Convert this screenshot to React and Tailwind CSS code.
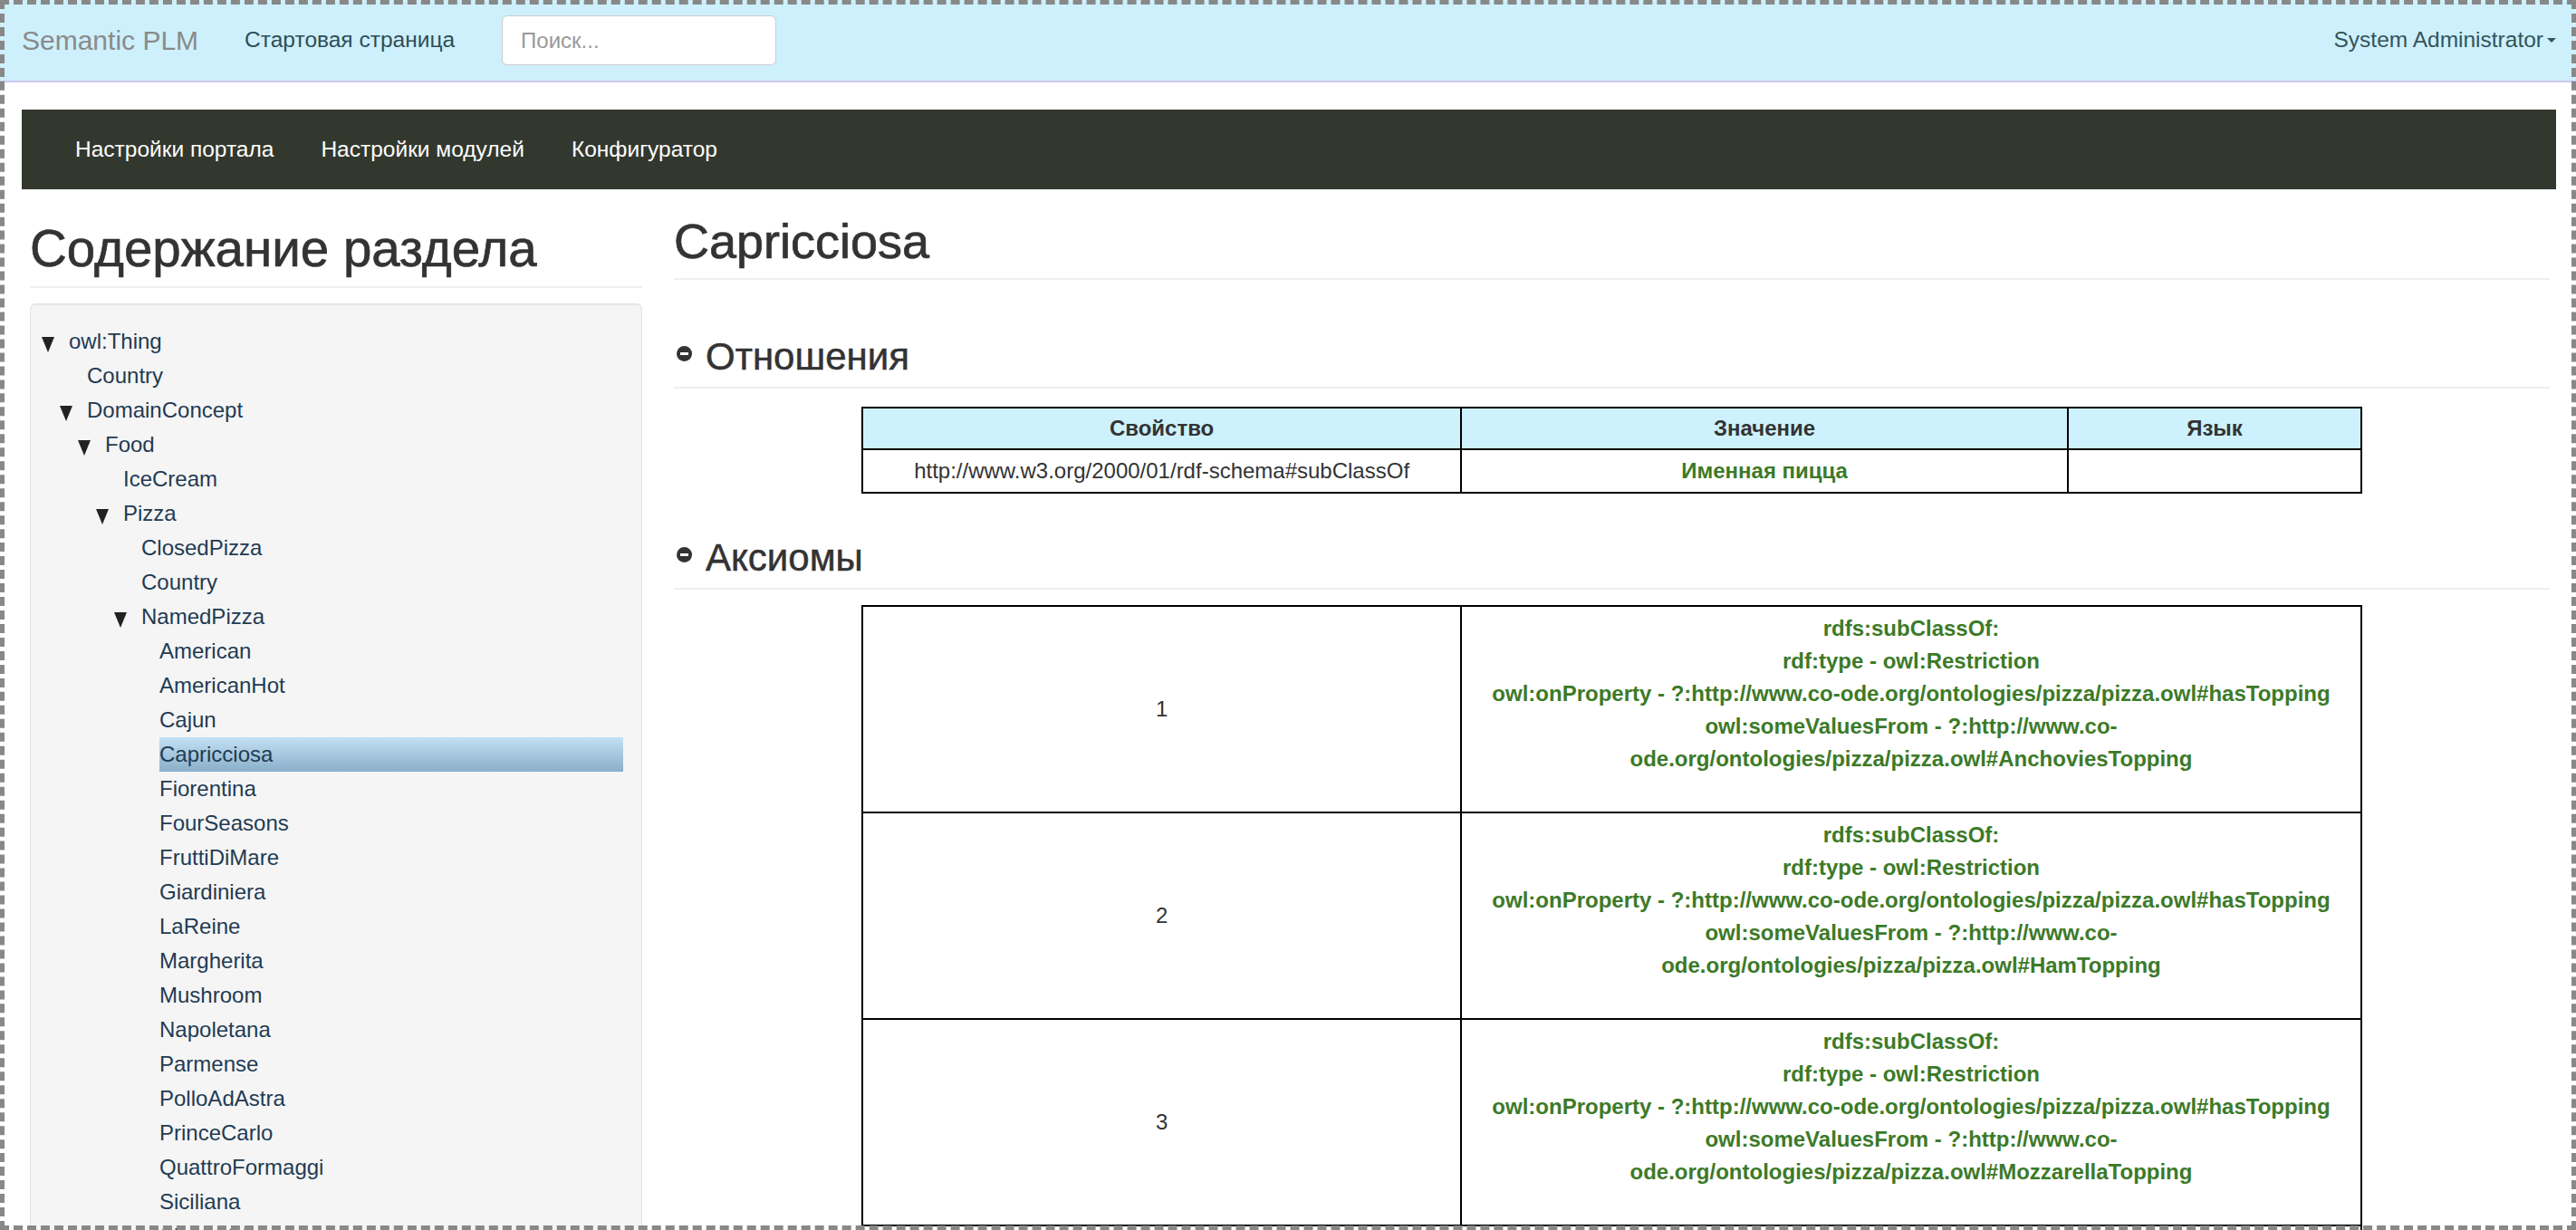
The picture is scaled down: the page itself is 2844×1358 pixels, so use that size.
import React from "react";

const pizzas = [
  "American",
  "AmericanHot",
  "Cajun",
  "Capricciosa",
  "Fiorentina",
  "FourSeasons",
  "FruttiDiMare",
  "Giardiniera",
  "LaReine",
  "Margherita",
  "Mushroom",
  "Napoletana",
  "Parmense",
  "PolloAdAstra",
  "PrinceCarlo",
  "QuattroFormaggi",
  "Siciliana",
  "SloppyGiuseppe",
  "Soho",
  "UnclesTreat",
  "Veneziana",
];

const tree = [
  { label: "owl:Thing", level: 0, open: true },
  { label: "Country", level: 1 },
  { label: "DomainConcept", level: 1, open: true },
  { label: "Food", level: 2, open: true },
  { label: "IceCream", level: 3 },
  { label: "Pizza", level: 3, open: true },
  { label: "ClosedPizza", level: 4 },
  { label: "Country", level: 4 },
  { label: "NamedPizza", level: 4, open: true },
  ...pizzas.map((p) => ({ label: p, level: 5 })),
];

const indent = [
  "pl-[12px]",
  "pl-[32px]",
  "pl-[52px]",
  "pl-[72px]",
  "pl-[92px]",
  "pl-[112px]",
];

const axioms = [
  "AnchoviesTopping",
  "HamTopping",
  "MozzarellaTopping",
  "OliveTopping",
];

const MinusSign = () => (
  <span className="mr-[15px] ml-[3px] flex h-[17px] w-[17px] -translate-y-[4px] items-center justify-center rounded-full bg-[#333]">
    <span className="h-[3px] w-[9px] bg-white" />
  </span>
);

const SectionTitle = ({ children, className }) => (
  <h3
    className={`flex items-center border-b-2 border-[#eeeeee] pb-[10px] text-[42px] leading-[46px] text-[#333] [-webkit-text-stroke:0.5px_#333] ${className}`}
  >
    <MinusSign />
    {children}
  </h3>
);

const TreeRow = ({ node }) => {
  const selected = node.label === "Capricciosa";
  return (
    <div className={`flex h-[38px] items-center ${indent[node.level]}`}>
      <span className="flex w-[30px] shrink-0 items-center">
        {node.open && (
          <svg width="14" height="17" viewBox="0 0 14 17" className="translate-y-[3px]">
            <polygon points="0,0 14,0 7,17" fill="#222" />
          </svg>
        )}
      </span>
      <span
        className={`flex h-[38px] flex-1 items-center ${
          selected ? "bg-linear-to-b from-[#c3e0f3] to-[#8aafca]" : ""
        }`}
      >
        {node.label}
      </span>
    </div>
  );
};

export default function App() {
  return (
    <div className="relative h-[1358px] overflow-hidden bg-white font-['Liberation_Sans',Arial,sans-serif] text-[#333]">
      {/* top navbar */}
      <header className="flex h-[91px] items-center border-b-2 border-[#d3c7ee] bg-[#cdf0fc] pr-[22px] pl-[24px]">
        <span className="text-[30px] text-[#8a8a8a]">Semantic PLM</span>
        <a className="ml-[51px] text-[24.5px] text-[#2f4d56]">Стартовая страница</a>
        <input
          className="ml-[52px] h-[55px] w-[303px] rounded-[6px] border border-[#cccccc] bg-white px-[20px] text-[24px] outline-none placeholder:text-[#999]"
          placeholder="Поиск..."
        />
        <div className="ml-auto flex items-center gap-[4px] text-[24.5px] text-[#34545a]">
          System Administrator
          <span className="h-0 w-0 border-x-[5px] border-t-[5px] border-x-transparent border-t-[#34545a]" />
        </div>
      </header>

      {/* admin menu */}
      <nav className="mt-[30px] mr-[22px] ml-[24px] flex h-[88px] items-center bg-[#33382e] pl-[33px]">
        {["Настройки портала", "Настройки модулей", "Конфигуратор"].map((item) => (
          <a key={item} className="px-[26px] text-[24.5px] text-white">
            {item}
          </a>
        ))}
      </nav>

      <div className="grid grid-cols-[676px_1fr] gap-[35px] pr-[29px] pl-[33px]">
        {/* tree */}
        <aside>
          <h2 className="mt-[36px] border-b-2 border-[#eeeeee] pb-[11px] text-[56.5px] leading-[60px] text-[#333] [-webkit-text-stroke:0.7px_#333]">
            Содержание раздела
          </h2>
          <div className="mt-[17px] rounded-[6px] border border-[#e3e3e3] bg-[#f5f5f5] pt-[22px] pr-[20px] text-[24px] text-[#1f3b53] shadow-[inset_0_1px_1px_rgba(0,0,0,0.05)]">
            {tree.map((node, i) => (
              <TreeRow key={i} node={node} />
            ))}
          </div>
        </aside>

        {/* details */}
        <main>
          <h2 className="mt-[27px] border-b-2 border-[#eeeeee] pb-[11px] text-[54px] leading-[60px] text-[#333] [-webkit-text-stroke:0.7px_#333]">
            Capricciosa
          </h2>

          <SectionTitle className="mt-[62px]">Отношения</SectionTitle>
          <table className="mx-auto mt-[20px] w-4/5 table-fixed border-collapse text-center text-[24px]">
            <colgroup>
              <col className="w-[661px]" />
              <col className="w-[670px]" />
              <col />
            </colgroup>
            <thead>
              <tr className="bg-[#cdf2fd]">
                <th className="border-2 border-black py-[5px] leading-[34px] font-bold">Свойство</th>
                <th className="border-2 border-black py-[5px] leading-[34px] font-bold">Значение</th>
                <th className="border-2 border-black py-[5px] leading-[34px] font-bold">Язык</th>
              </tr>
            </thead>
            <tbody>
              <tr>
                <td className="border-2 border-black py-[6px] leading-[34px]">
                  http://www.w3.org/2000/01/rdf-schema#subClassOf
                </td>
                <td className="border-2 border-black py-[6px] leading-[34px] font-bold text-[#3c7a28]">
                  Именная пицца
                </td>
                <td className="border-2 border-black" />
              </tr>
            </tbody>
          </table>

          <SectionTitle className="mt-[48px]">Аксиомы</SectionTitle>
          <table className="mx-auto mt-[17px] w-4/5 table-fixed border-collapse text-center text-[24px]">
            <colgroup>
              <col className="w-[661px]" />
              <col />
            </colgroup>
            <tbody>
              {axioms.map((topping, i) => (
                <tr key={topping}>
                  <td className="border-2 border-black align-middle">{i + 1}</td>
                  <td className="border-2 border-black pt-[6px] pb-[40px] align-top leading-[36px] font-bold whitespace-nowrap text-[#3c7a28]">
                    <div>rdfs:subClassOf:</div>
                    <div>rdf:type - owl:Restriction</div>
                    <div>owl:onProperty - ?:http://www.co-ode.org/ontologies/pizza/pizza.owl#hasTopping</div>
                    <div>owl:someValuesFrom - ?:http://www.co-</div>
                    <div>ode.org/ontologies/pizza/pizza.owl#{topping}</div>
                  </td>
                </tr>
              ))}
            </tbody>
          </table>
        </main>
      </div>

      {/* dashed frame */}
      <div className="pointer-events-none absolute inset-0 border-[5px] border-dashed border-[#888888]" />
    </div>
  );
}
